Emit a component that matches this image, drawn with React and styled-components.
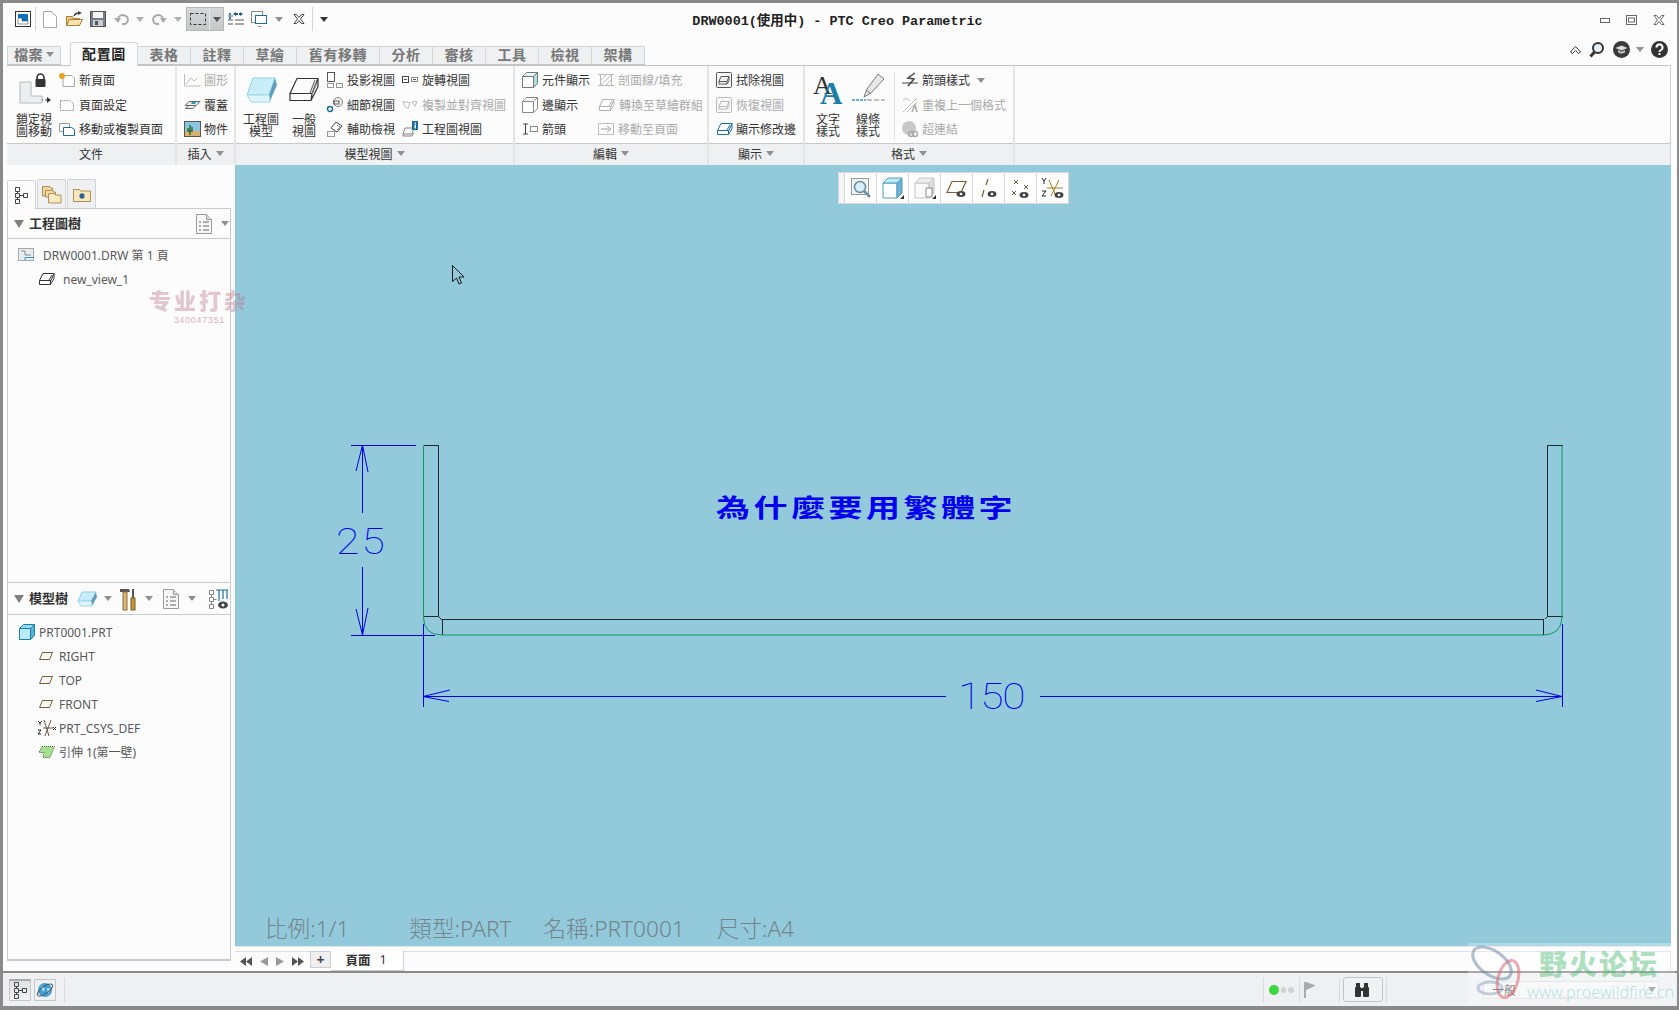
import React from "react";
import styled, { createGlobalStyle } from "styled-components";

const GlobalStyle = createGlobalStyle`
  html, body {
    margin: 0;
    padding: 0;
    background: #8a8a8a;
  }
  * {
    box-sizing: border-box;
  }
`;

const CJK = `"Noto Sans", "Noto Sans CJK TC", sans-serif`;

const Window = styled.div`
  position: relative;
  width: 1679px;
  height: 1010px;
  overflow: hidden;
  display: flex;
  flex-direction: column;
  background: #fcfcfc;
  border-style: solid;
  border-color: #8a8a8a;
  border-width: 3px 2px 4px 3px;
  font-family: ${CJK};
  color: #333;
`;

const TopRow = styled.div`
  display: flex;
  align-items: center;
  height: 32px;
  flex-shrink: 0;
`;

const QuickBar = styled.div`
  flex: 1;
  display: flex;
  align-items: center;
  padding-left: 7px;
`;

const QuickSlot = styled.div`
  width: ${(p) => p.$w}px;
  height: 24px;
  display: flex;
  align-items: center;
  justify-content: center;
  flex-shrink: 0;
`;

const QuickSep = styled.div`
  width: 1px;
  height: 24px;
  background: #d4d6d8;
  flex-shrink: 0;
`;

const SelectCombo = styled.div`
  display: flex;
  width: 38px;
  height: 24px;
  margin: 0 1px;
  background: linear-gradient(#d6d7d9, #c5c7c9);
  border: 1px solid #b5b7b9;
  flex-shrink: 0;
`;

const ComboMain = styled.div`
  flex: 1;
  display: flex;
  align-items: center;
  justify-content: center;
  border-right: 1px solid #e8e8e8;
`;

const ComboArrow = styled.div`
  width: 13px;
  display: flex;
  align-items: center;
  justify-content: center;
`;

const Title = styled.div`
  font-family: "Liberation Mono", "Noto Sans CJK TC", monospace;
  font-weight: 700;
  font-size: 13.45px;
  color: #222;
  white-space: nowrap;
`;

const WinButtons = styled.div`
  flex: 1;
  display: flex;
  align-items: center;
  justify-content: flex-end;
  gap: 16px;
  padding-right: 12px;
  padding-top: 2px;
`;

const TabRow = styled.div`
  display: flex;
  align-items: flex-end;
  height: 30px;
  padding-left: 4px;
  flex-shrink: 0;
`;

const Tab = styled.div`
  width: ${(p) => p.$w}px;
  height: ${(p) => (p.$active ? "24px" : "19px")};
  margin-right: ${(p) => p.$gap || 0}px;
  padding-bottom: 2px;
  display: flex;
  align-items: center;
  justify-content: center;
  gap: 3px;
  font-size: 14px;
  font-weight: 700;
  line-height: 15px;
  letter-spacing: 0.6px;
  color: ${(p) => (p.$active ? "#222" : "#777")};
  background: ${(p) => (p.$active ? "#fcfcfc" : "#eef0f2")};
  border: 1px solid #d3d5d8;
  border-bottom: ${(p) => (p.$active ? "none" : "1px solid #c4c4c4")};
  border-left: ${(p) => (p.$active || p.$first ? "1px solid #d3d5d8" : "none")};
  border-radius: ${(p) => (p.$active ? "3px 3px 0 0" : "0")};
  position: relative;
  top: ${(p) => (p.$active ? "1px" : "0")};
  z-index: ${(p) => (p.$active ? 2 : 1)};
`;

const HelpCluster = styled.div`
  margin-left: auto;
  margin-bottom: 7px;
  padding-right: 9px;
  display: flex;
  align-items: center;
`;

const Ribbon = styled.div`
  display: flex;
  height: 100px;
  margin: 0 6px 0 4px;
  border-top: 1px solid #c4c4c4;
  border-right: 1px solid #d0d0d0;
  flex-shrink: 0;
`;

const Group = styled.div`
  width: ${(p) => p.$w}px;
  flex: ${(p) => (p.$fill ? 1 : "none")};
  display: flex;
  flex-direction: column;
  border-right: ${(p) => (p.$fill ? "none" : "2px solid #e4e5e7")};
`;

const GroupBody = styled.div`
  flex: 1;
  display: flex;
  padding: 2px 0 0 ${(p) => p.$pad || 0}px;
`;

const GroupLabel = styled.div`
  height: 22px;
  padding-bottom: 2px;
  display: flex;
  align-items: center;
  justify-content: center;
  gap: 4px;
  font-size: 12px;
  color: #333;
  background: #eef0f2;
  border-top: 1px solid #c8c8c8;
`;

const LargeBtn = styled.div`
  width: 38px;
  margin-right: ${(p) => p.$gap || 0}px;
  height: 74px;
  display: flex;
  flex-direction: column;
  align-items: center;
  justify-content: space-between;
  padding-top: ${(p) => p.$pt || 6}px;
  flex-shrink: 0;
`;

const LargeText = styled.div`
  font-size: 12px;
  line-height: 12px;
  text-align: center;
  white-space: nowrap;
  margin-bottom: 4px;
`;

const SmallCol = styled.div`
  width: ${(p) => p.$w}px;
  display: flex;
  flex-direction: column;
  flex-shrink: 0;
`;

const SmallRow = styled.div`
  height: 24.5px;
  display: flex;
  align-items: center;
  gap: ${(p) => p.$gap || 4}px;
  font-size: 12px;
  white-space: nowrap;
  color: ${(p) => (p.$off ? "#aaa" : "#333")};
`;

const RowArrow = styled.span`
  margin-left: 3px;
`;

const RibbonSep = styled.div`
  width: 1px;
  height: 68px;
  margin: 4px 7px 0 7px;
  background: #dfe0e2;
`;

const Main = styled.div`
  flex: 1;
  display: flex;
  min-height: 0;
`;

const LeftPanel = styled.div`
  width: 232px;
  display: flex;
  flex-direction: column;
  padding: 14px 4px 10px;
  flex-shrink: 0;
`;

const PanelTabs = styled.div`
  display: flex;
  height: 29px;
  gap: 1px;
  flex-shrink: 0;
`;

const PanelTab = styled.div`
  width: 29px;
  display: flex;
  align-items: center;
  justify-content: center;
  background: ${(p) => (p.$active ? "#fcfcfc" : "#eef0f2")};
  border: 1px solid #d0d2d5;
  border-bottom: none;
  border-radius: 2px 2px 0 0;
  position: relative;
  top: ${(p) => (p.$active ? "1px" : "0")};
`;

const PanelBox = styled.div`
  flex: 1;
  display: flex;
  flex-direction: column;
  background: #fcfcfc;
  border: 1px solid #c8cacc;
  border-bottom-width: 2px;
`;

const Section = styled.div`
  height: ${(p) => p.$h || "auto"};
  flex: ${(p) => (p.$h ? "none" : 1)};
  border-bottom: ${(p) => (p.$h ? "1px solid #c8cacc" : "none")};
`;

const SectionHead = styled.div`
  height: ${(p) => p.$h}px;
  display: flex;
  align-items: center;
  padding-left: 6px;
  border-bottom: 1px solid #c8cacc;
  font-size: 13px;
  font-weight: 700;
  color: #333;
`;

const HeadText = styled.div`
  margin: -2px 0 0 5px;
`;

const HeadSlot = styled.div`
  margin-left: ${(p) => p.$ml || 0}px;
  display: flex;
  align-items: center;
`;

const TreeList = styled.div`
  padding-top: ${(p) => p.$pt}px;
`;

const TreeRow = styled.div`
  height: ${(p) => p.$h || 24}px;
  display: flex;
  align-items: center;
  padding-left: ${(p) => p.$indent}px;
  gap: ${(p) => p.$gap || 5}px;
  font-size: 12px;
  color: #585858;
  white-space: nowrap;
`;

const RightCol = styled.div`
  width: 1436px;
  display: flex;
  flex-direction: column;
  flex-shrink: 0;
`;

const Canvas = styled.div`
  position: relative;
  flex: 1;
  background: #92cadc;
  overflow: hidden;
`;

const Drawing = styled.svg`
  position: absolute;
  left: 0;
  top: 0;
  shape-rendering: crispEdges;
`;

const FloatBar = styled.div`
  position: absolute;
  left: 603px;
  top: 7px;
  height: 32px;
  display: flex;
  padding-left: 5px;
  background: #f4f5f6;
  border: 1px solid #d6d8da;
`;

const FloatCell = styled.div`
  width: 32px;
  display: flex;
  align-items: center;
  justify-content: center;
  background: #fff;
  border-left: 1px solid #d6d8da;
`;

const Note = styled.div`
  position: absolute;
  left: 481px;
  top: 325px;
  font-family: "Noto Sans CJK TC", sans-serif;
  font-size: 34px;
  font-weight: 700;
  line-height: 34px;
  letter-spacing: 3.5px;
  color: #0000ee;
  white-space: nowrap;
  transform: scaleY(0.74);
`;

const DimText = styled.div`
  position: absolute;
  left: ${(p) => p.$x}px;
  top: ${(p) => p.$y}px;
  font-family: Roboto, sans-serif;
  font-weight: 100;
  font-size: 37px;
  line-height: 37px;
  letter-spacing: ${(p) => p.$ls}px;
  color: #0000e6;
  transform-origin: left center;
  transform: scaleX(1.15);
`;

const InfoRow = styled.div`
  position: absolute;
  left: 30px;
  bottom: 1px;
  display: flex;
  gap: 32px;
  font-size: 22.6px;
  line-height: 32px;
  font-weight: 300;
  color: #74848b;
  white-space: nowrap;
`;

const InfoScale = styled.span`
  margin-right: 28px;
`;

const PageBar = styled.div`
  height: 25px;
  display: flex;
  align-items: flex-start;
  padding-top: 4px;
  background: #fcfcfc;
  border-top: 1px solid #e2e4e6;
  flex-shrink: 0;
`;

const PageNav = styled.div`
  width: 75px;
  height: 20px;
  display: flex;
  align-items: center;
  gap: 8px;
  padding-left: 5px;
  border-top: 1px solid #dcdee0;
  flex-shrink: 0;
`;

const PlusBtn = styled.div`
  width: 21px;
  height: 17px;
  display: flex;
  align-items: center;
  justify-content: center;
  font-size: 14px;
  font-weight: 700;
  line-height: 14px;
  color: #444;
  background: #eef0f2;
  border: 1px solid #ccced1;
  flex-shrink: 0;
`;

const PageTab = styled.div`
  width: 73px;
  height: 20px;
  padding: 0 2px 3px 0;
  display: flex;
  align-items: center;
  justify-content: center;
  gap: 9px;
  font-size: 12.5px;
  font-weight: 700;
  color: #333;
  background: #fff;
  border-right: 1px solid #ccced1;
  border-bottom: 1px solid #ccced1;
  flex-shrink: 0;
`;

const PageNum = styled.span`
  font-weight: 400;
  color: #335;
`;

const PageRest = styled.div`
  flex: 1;
  height: 20px;
  border-top: 1px solid #dcdee0;
  border-right: 1px solid #dcdee0;
`;

const StatusBar = styled.div`
  height: 35px;
  display: flex;
  align-items: center;
  padding: 0 20px 0 9px;
  background: #eef0f2;
  border-top: 2px solid #8a8a8a;
  margin-left: -3px;
  margin-right: -2px;
  flex-shrink: 0;
`;

const StatusBtn = styled.div`
  width: 22px;
  height: 22px;
  margin-right: 3px;
  display: flex;
  align-items: center;
  justify-content: center;
  background: ${(p) => (p.$on ? "linear-gradient(#e0e1e3, #f2f3f4)" : "#eef0f2")};
  border: 1px solid #c4c6c9;
  border-top: ${(p) => (p.$on ? "2px solid #a8aaad" : "1px solid #c4c6c9")};
`;

const StatusSep = styled.div`
  width: 1px;
  height: 26px;
  background: #dadcde;
  margin: ${(p) => p.$m || "0"};
  flex-shrink: 0;
`;

const StatusFill = styled.div`
  flex: 1;
`;

const Dots = styled.div`
  width: 30px;
  display: flex;
  align-items: center;
  gap: 2px;
  padding-left: 5px;
`;

const Dot = styled.div`
  width: ${(p) => p.$s}px;
  height: ${(p) => p.$s}px;
  border-radius: 50%;
  background: ${(p) => p.$c};
`;

const FindBtn = styled.div`
  width: 40px;
  height: 25px;
  margin: 0 3px;
  padding-right: 2px;
  display: flex;
  align-items: center;
  justify-content: center;
  background: #f0f1f2;
  border: 1px solid #c2c4c7;
  border-radius: 3px;
`;

const ModeSelect = styled.div`
  width: 176px;
  height: 18px;
  margin-left: 96px;
  display: flex;
  align-items: center;
  padding-left: 8px;
  justify-content: space-between;
  font-size: 12px;
  color: #555;
  background: #f4f5f6;
  border: 1px solid #dcdee0;
`;

const ModeArrow = styled.div`
  width: 14px;
  height: 16px;
  display: flex;
  align-items: center;
  justify-content: center;
  border-left: 1px solid #dcdee0;
`;

const Stamp = styled.div`
  position: absolute;
  left: 143px;
  top: 284px;
  display: flex;
  flex-direction: column;
  align-items: flex-end;
  width: 103px;
  pointer-events: none;
`;

const StampMain = styled.div`
  font-family: "Noto Sans CJK SC", sans-serif;
  font-size: 22px;
  font-weight: 900;
  line-height: 24px;
  letter-spacing: 3px;
  color: rgba(190, 120, 140, 0.42);
  white-space: nowrap;
`;

const StampNum = styled.div`
  margin: 5px 24px 0 0;
  font-family: "Liberation Sans", sans-serif;
  font-size: 9px;
  line-height: 9px;
  letter-spacing: 0.7px;
  color: rgba(190, 120, 140, 0.6);
`;

const Forum = styled.div`
  position: absolute;
  left: 1465px;
  top: 940px;
  width: 207px;
  height: 62px;
  display: flex;
  background: rgba(255, 255, 255, 0.28);
  pointer-events: none;
`;

const ForumText = styled.div`
  display: flex;
  flex-direction: column;
  align-items: flex-start;
  margin-left: -1px;
`;

const ForumName = styled.div`
  margin: 5px 0 0 12px;
  font-family: "Noto Sans CJK SC", sans-serif;
  font-size: 28px;
  font-weight: 900;
  line-height: 30px;
  letter-spacing: 2px;
  color: rgba(60, 180, 100, 0.42);
  white-space: nowrap;
`;

const ForumUrl = styled.div`
  margin-top: 5px;
  font-size: 16.2px;
  line-height: 18px;
  font-weight: 300;
  color: rgba(90, 190, 190, 0.42);
  white-space: nowrap;
`;

const Svg = styled.svg`
  display: block;
  flex-shrink: 0;
  overflow: visible;
`;

const Cursor = styled.svg`
  position: absolute;
  left: 217px;
  top: 100px;
`;

const ico = (w, h, body) => (
  <Svg width={w} height={h} viewBox={`0 0 ${w} ${h}`}>
    {body}
  </Svg>
);

const Arrow = ({ c = "#8f8f8f" }) => ico(8, 5, <path d="M0 0h8L4 5z" fill={c} />);

const plane = (c = "#7a5c2e") =>
  ico(16, 10, <path d="M4.5 1.5h10L11.5 8.5H1.5z" fill="none" stroke={c} />);

const docList = ico(
  16,
  20,
  <g>
    <path d="M.5.5h10l5 5v14H.5z" fill="#f6f6f6" stroke="#9a9a9a" />
    <path d="M10.5.5v5h5" fill="#ddd" stroke="#9a9a9a" />
    <path d="M3 8h2M7 8h6M3 12h2M7 12h6M3 16h2M7 16h6" stroke="#666" />
  </g>
);

const treeIcon = (c = "#444") =>
  ico(
    15,
    17,
    <path
      d="M1.5.5h4v4h-4zM1.5 6.5h4v4h-4zM1.5 12.5h4v4h-4zM9.5 6.5h4v4h-4zM3.5 4.5v2M3.5 10.5v2M5.5 8.5h4"
      fill="none"
      stroke={c}
    />
  );

const eyeMark = (x, y) => (
  <g>
    <ellipse cx={x} cy={y} rx="4.5" ry="3" fill="#444" />
    <circle cx={x} cy={y} r="1.3" fill="#fff" />
  </g>
);

const partLarge = ico(
  32,
  26,
  <g>
    <path d="M8 1h22l-6 17H2z" fill="#c8eefa" stroke="#8fd0e4" />
    <path d="M30 1l2 7-7 16-1-6z" fill="#5f9fbd" />
    <path d="M2 18l4 7h19l-1-7z" fill="#dff5fc" stroke="#9ed8e8" />
  </g>
);

const partSmallBlue = ico(
  20,
  16,
  <g>
    <path d="M5 1h14l-4 9H1z" fill="#c8eefa" stroke="#8fd0e4" />
    <path d="M19 1l1 5-5 9-1-5z" fill="#5f9fbd" />
    <path d="M1 10l3 5h11l-1-5z" fill="#dff5fc" stroke="#9ed8e8" />
  </g>
);

const partWire = ico(
  32,
  26,
  <g fill="none" stroke="#333" strokeWidth="1.2">
    <path d="M9 1.5h21l-6 15H2zM2 16.5v7h21l7-14v-8M24 16.5l-1 7" />
    <path d="M27 3l-5 13M29 5l-5 12" stroke="#777" />
  </g>
);

const smallPart = (c = "#666", fill = "#fff") =>
  ico(
    17,
    14,
    <g fill={fill} stroke={c}>
      <path d="M5 1.5h11l-3 7H1.5zM1.5 8.5v4h11l3.5-6v-5M12.5 8.5v4" />
      <path d="M14 3l-3 5" />
    </g>
  );

const cube = (stroke, top, side, front = "#fff") =>
  ico(
    16,
    16,
    <g stroke={stroke}>
      <path d="M.5 4.5h11v11H.5z" fill={front} />
      <path d="M.5 4.5l4-4h11l-4 4z" fill={top} />
      <path d="M11.5 4.5l4-4v11l-4 4z" fill={side} />
    </g>
  );

const boxed = (c) =>
  ico(
    17,
    16,
    <g>
      <rect x=".5" y=".5" width="15" height="15" rx="1" fill="#f8f8f8" stroke={c} />
      <path d="M5 4.5h8l-2 5H3zM3 9.5v2.500h8l2-3v-4.500M11 9.5v2.500" fill="none" stroke={c} />
    </g>
  );

const lockMove = ico(
  33,
  32,
  <g>
    <path d="M2 8h11v14h11v7H2z" fill="#eceff1" stroke="#b8b8b8" />
    <path d="M19 5V3.5a3.5 3.5 0 0 1 7 0V5" fill="none" stroke="#333" strokeWidth="1.6" />
    <rect x="17.5" y="5" width="10" height="8" rx="1" fill="#333" />
    <path d="M24 26h1M27 26h3" stroke="#333" />
    <path d="M29 23l4 3-4 3z" fill="#333" />
  </g>
);

const textStyle = ico(
  30,
  32,
  <g>
    <text x="0" y="21" fontFamily="Liberation Serif, serif" fontSize="26" fill="#333">
      A
    </text>
    <text x="7" y="31" fontFamily="Liberation Serif, serif" fontWeight="700" fontSize="31" fill="#1c7ea6">
      A
    </text>
  </g>
);

const lineStyle = ico(
  33,
  30,
  <g>
    <path d="M26 1l6 5-13 14-7 4 3-8z" fill="#e6e6e6" stroke="#777" />
    <path d="M14 17l4 3" stroke="#777" />
    <path d="M0 27h14" stroke="#2f9ac6" strokeWidth="1.5" strokeDasharray="3 1" />
    <path d="M15 27h18" stroke="#aaa" strokeWidth="1.5" strokeDasharray="5 2" />
  </g>
);

const csys = ico(
  18,
  18,
  <g>
    <path d="M6 1l5 16M13 1L7 17M5 9h10" stroke="#6b5a3a" fill="none" />
    <path d="M0 2l2 2 2-2M2 4v2M0 11h3l-3 4h3M15 8l3 3M18 8l-3 3" stroke="#222" fill="none" />
  </g>
);

const drwIcon = ico(
  16,
  13,
  <g>
    <rect x=".5" y=".5" width="15" height="12" fill="#e8edf0" stroke="#a3a8ab" />
    <path d="M3 3h4v4h6" fill="none" stroke="#888" />
    <path d="M7 12.5V9.5h8.5" fill="none" stroke="#2f9ac6" />
  </g>
);

function Item({ icon, off, gap, after, children }) {
  return (
    <SmallRow $off={off} $gap={gap}>
      {icon}
      <span>{children}</span>
      {after && <RowArrow>{after}</RowArrow>}
    </SmallRow>
  );
}

const quickIcons = {
  app: ico(
    16,
    16,
    <g>
      <rect x=".5" y=".5" width="15" height="15" fill="#fff" stroke="#333" />
      <rect x="3" y="3" width="10" height="10" fill="#0a72c4" />
      <path d="M3 7h4v3h6v3H3z" fill="#fff" stroke="#333" strokeWidth=".5" />
    </g>
  ),
  doc: ico(14, 17, <path d="M.5.5h8l5 5v11H.5z" fill="#fff" stroke="#a8a8a8" />),
  open: ico(
    17,
    16,
    <g>
      <path d="M.5 5.5h6l1 2h6v7H.5z" fill="#e8c77c" stroke="#a5803f" />
      <path d="M.5 14.5l3-6h13l-3 6z" fill="#f8e2ad" stroke="#a5803f" />
      <path d="M8 5c1-3 3-3 5-3" stroke="#444" fill="none" strokeWidth="1.4" />
      <path d="M12 0l4 2-4 2z" fill="#444" />
    </g>
  ),
  save: ico(
    16,
    16,
    <g>
      <rect x=".5" y=".5" width="15" height="15" fill="#77808a" stroke="#555" />
      <rect x="3" y="1" width="10" height="6" fill="#f5f5f5" />
      <rect x="3" y="9" width="10" height="6" fill="#c9ced3" />
      <rect x="5" y="10" width="3" height="4" fill="#555" />
    </g>
  ),
  undo: ico(
    16,
    13,
    <g>
      <path d="M4 6a5 4.500 0 1 1 4 5h3" fill="none" stroke="#a8a8a8" strokeWidth="2" />
      <path d="M0 5h7l-3 5z" fill="#a8a8a8" />
    </g>
  ),
  redo: ico(
    16,
    13,
    <g>
      <path d="M12 6a5 4.500 0 1 0-4 5H5" fill="none" stroke="#a8a8a8" strokeWidth="2" />
      <path d="M16 5H9l3 5z" fill="#a8a8a8" />
    </g>
  ),
  select: ico(
    16,
    12,
    <rect x=".5" y=".5" width="15" height="11" fill="none" stroke="#333" strokeDasharray="3 2" />
  ),
  regen: ico(
    16,
    15,
    <g>
      <path d="M0 4h5M0 8h5M0 12h5M7 8h9M7 12h9" stroke="#555" />
      <path d="M1 1h2v2H1zM1 5h2v2H1z" fill="#1a7fb0" />
      <path d="M6 2h4M11 2h3" stroke="#1a5f90" strokeWidth="2" />
      <path d="M8 0L5 2l3 2zM12 0l3 2-3 2z" fill="#1a5f90" />
    </g>
  ),
  win: ico(
    16,
    16,
    <g fill="#fff">
      <rect x=".5" y=".5" width="11" height="11" stroke="#888" />
      <rect x="4.5" y="4.5" width="11" height="8" stroke="#1a6f9a" />
      <path d="M7 15.5h3" stroke="#888" />
    </g>
  ),
  close: ico(
    12,
    10,
    <path d="M1 .5h2.500L6 3.500 8.500.5H11L7.500 5 11 9.500H8.500L6 6.500 3.500 9.500H1L4.500 5z" fill="#fff" stroke="#444" />
  ),
};

const winMin = ico(10, 5, <rect x=".5" y=".5" width="9" height="4" fill="#fff" stroke="#666" />);
const winMax = ico(
  11,
  10,
  <g fill="none" stroke="#666">
    <rect x=".5" y=".5" width="10" height="9" />
    <rect x="2.5" y="3" width="6" height="4" />
  </g>
);
const winClose = ico(
  12,
  10,
  <path d="M1 .5h2.500L6 3.500 8.500.5H11L7.500 5 11 9.500H8.500L6 6.500 3.500 9.500H1L4.500 5z" fill="#fff" stroke="#666" />
);

const chevrons = ico(11, 8, <path d="M.5 6L5.500.5l5 5.500-2 1.500-3-3-3 3z" fill="#fff" stroke="#333" />);
const searchIcon = ico(
  15,
  16,
  <g>
    <circle cx="9" cy="6" r="5" fill="#e7f3fb" stroke="#333" strokeWidth="2" />
    <path d="M5.500 10L1.500 14.500" stroke="#333" strokeWidth="3" />
  </g>
);
const hatIcon = ico(
  17,
  17,
  <g>
    <circle cx="8.500" cy="8.500" r="8.500" fill="#3a3a3a" />
    <path d="M2.500 7l6-2.500 6 2.500-6 2.500z" fill="#dcdcdc" />
    <path d="M5 9v2.500c2 1.500 5 1.500 7 0V9l-3.500 1.500z" fill="#bbb" />
  </g>
);
const helpIcon = ico(
  17,
  17,
  <g>
    <circle cx="8.500" cy="8.500" r="8.500" fill="#333" />
    <path d="M5.500 6.500a3 3 0 1 1 4.500 2.500c-1 .6-1.500 1-1.500 2" fill="none" stroke="#fff" strokeWidth="2" />
    <rect x="7.500" y="12" width="2" height="2" fill="#fff" />
  </g>
);

const folders = ico(
  20,
  20,
  <g>
    <path d="M.5 2.500h7l1 1.500h2v8H.5z" fill="#efd59c" stroke="#b0905a" />
    <path d="M3.500 6.500h7l1 1.500h2v5h-10z" fill="#f2dca9" stroke="#b0905a" />
    <path d="M6.500 9.500h6l1 1.500h5.500v8H6.500z" fill="#fae9c2" stroke="#b0905a" />
  </g>
);

const folderStar = ico(
  18,
  15,
  <g>
    <path d="M.5 2.500h6l1 1.500h10v10.500H.5z" fill="#f8e6bd" stroke="#b0905a" />
    <path d="M9 6v6M6 9h6M7 7l4 4M11 7l-4 4" stroke="#1a5f90" strokeWidth="1.200" />
  </g>
);

const triangle = ico(10, 8, <path d="M0 0h10L5 8z" fill="#808080" />);

const tools = ico(
  16,
  22,
  <g>
    <path d="M0 1h9l1 3H0z" fill="#555" />
    <rect x="3" y="4" width="4" height="18" fill="#d9b77a" stroke="#8a6c38" />
    <rect x="12" y="1" width="2" height="9" fill="#555" />
    <rect x="11" y="10" width="4" height="12" fill="#c9973d" stroke="#7a5a20" />
  </g>
);

const modelTreeCfg = ico(
  20,
  20,
  <g fill="none">
    <path d="M1.500 1.500h4v4h-4zM1.500 8.500h4v4h-4zM1.500 15.500h4v4h-4zM3.500 5.500v3M3.500 12.500v3M5.500 10.500h3" stroke="#888" />
    <path d="M8 1h12M11 1v11M15 1v9M19 1v9" stroke="#1a6f9a" strokeWidth="1.200" />
    <ellipse cx="15" cy="16" rx="5" ry="3.500" fill="#444" />
    <circle cx="15" cy="16" r="1.500" fill="#fff" />
  </g>
);

const tri = (w, d, c) => ico(w, 9, <path d={d} fill={c} />);

const Sketch = () => (
  <Drawing width="1436" height="781" viewBox="235 165 1436 781">
    <g fill="none" strokeWidth="1">
      <g stroke="#1d2a30">
        <path d="M423.5 445.500h15v171h-15M438.500 616.500l3 3h1102M442.500 619.500v15" />
        <path d="M1562.500 445.500h-15v171h15M1547.500 616.500l-3 3M1543.500 619.500v15" />
      </g>
      <g stroke="#0a9a60" shapeRendering="geometricPrecision">
        <path d="M423.500 445.500v172q0 17 18 17.500h1102q18-.5 18.500-17.500v-172" />
      </g>
      <g stroke="#0000e6">
        <path d="M351 445.500h65M362.500 445v68M362.500 567v68M351 635.500h84" />
        <path d="M423.500 624v83M1562.500 624v83M423 696.500h523M1040 696.500h522" />
      </g>
      <g stroke="#0000e6" shapeRendering="geometricPrecision">
        <path d="M356 471l6.500-26 5.500 27M356 609l6.500 26 5.500-27" />
        <path d="M450 690l-27 6.500 26 5M1536 690l26 6.500-26 5" />
      </g>
    </g>
  </Drawing>
);

export default function App() {
  return (
    <>
      <GlobalStyle />
      <Window>
        <TopRow>
          <QuickBar>
            <QuickSlot $w={25}>{quickIcons.app}</QuickSlot>
            <QuickSep />
            <QuickSlot $w={27}>{quickIcons.doc}</QuickSlot>
            <QuickSlot $w={23}>{quickIcons.open}</QuickSlot>
            <QuickSlot $w={24}>{quickIcons.save}</QuickSlot>
            <QuickSlot $w={23}>{quickIcons.undo}</QuickSlot>
            <QuickSlot $w={14}>
              <Arrow c="#b0b0b0" />
            </QuickSlot>
            <QuickSlot $w={24}>{quickIcons.redo}</QuickSlot>
            <QuickSlot $w={14}>
              <Arrow c="#b0b0b0" />
            </QuickSlot>
            <SelectCombo>
              <ComboMain>{quickIcons.select}</ComboMain>
              <ComboArrow>
                <Arrow c="#555" />
              </ComboArrow>
            </SelectCombo>
            <QuickSlot $w={21}>{quickIcons.regen}</QuickSlot>
            <QuickSlot $w={26}>{quickIcons.win}</QuickSlot>
            <QuickSlot $w={14}>
              <Arrow />
            </QuickSlot>
            <QuickSlot $w={26}>{quickIcons.close}</QuickSlot>
            <QuickSep />
            <QuickSlot $w={22}>
              <Arrow c="#333" />
            </QuickSlot>
          </QuickBar>
          <Title>DRW0001(使用中) - PTC Creo Parametric</Title>
          <WinButtons>
            {winMin}
            {winMax}
            {winClose}
          </WinButtons>
        </TopRow>

        <TabRow>
          <Tab $w={54} $gap={9} $first>
            檔案 <Arrow />
          </Tab>
          <Tab $w={68} $active>
            配置圖
          </Tab>
          <Tab $w={53}>表格</Tab>
          <Tab $w={53}>註釋</Tab>
          <Tab $w={53}>草繪</Tab>
          <Tab $w={83}>舊有移轉</Tab>
          <Tab $w={53}>分析</Tab>
          <Tab $w={53}>審核</Tab>
          <Tab $w={53}>工具</Tab>
          <Tab $w={53}>檢視</Tab>
          <Tab $w={53}>架構</Tab>
          <HelpCluster>
            {chevrons}
            <HeadSlot $ml={8}>{searchIcon}</HeadSlot>
            <HeadSlot $ml={9}>{hatIcon}</HeadSlot>
            <HeadSlot $ml={6}>
              <Arrow />
            </HeadSlot>
            <HeadSlot $ml={7}>{helpIcon}</HeadSlot>
          </HelpCluster>
        </TabRow>

        <Ribbon>
          <Group $w={170}>
            <GroupBody $pad={8}>
              <LargeBtn $gap={6} $pt={6}>
                {lockMove}
                <LargeText>
                  鎖定視
                  <br />
                  圖移動
                </LargeText>
              </LargeBtn>
              <SmallCol $w={110}>
                <Item
                  icon={ico(
                    16,
                    14,
                    <g>
                      <path d="M4 2.500h9l2.500 2.500v8.500H4z" fill="#fff" stroke="#a8a8a8" />
                      <circle cx="3" cy="3" r="3" fill="#f0a020" />
                    </g>
                  )}
                >
                  新頁面
                </Item>
                <Item
                  icon={ico(
                    16,
                    14,
                    <path d="M1.500 2.500h9l4 3v7h-13z" fill="#fbfbfb" stroke="#999" strokeDasharray="2 1" />
                  )}
                >
                  頁面設定
                </Item>
                <Item
                  icon={ico(
                    16,
                    14,
                    <g fill="#fff">
                      <path d="M.5 1.500h10v8H.5z" stroke="#999" />
                      <path d="M4.500 5.500h8l3 2v6h-11z" stroke="#1a6f9a" />
                    </g>
                  )}
                >
                  移動或複製頁面
                </Item>
              </SmallCol>
            </GroupBody>
            <GroupLabel>文件</GroupLabel>
          </Group>

          <Group $w={59}>
            <GroupBody $pad={7}>
              <SmallCol $w={50}>
                <Item
                  off
                  gap={3}
                  icon={ico(17, 14, <path d="M.5 1v12h16M2 11l5-6 3 3 3-3" fill="none" stroke="#bbb" />)}
                >
                  圖形
                </Item>
                <Item
                  gap={3}
                  icon={ico(
                    17,
                    14,
                    <g fill="#eee" stroke="#666">
                      <path d="M5 3.500h11l-4 4H1z" />
                      <path d="M5 7.500h7l-3 3H1.500z" />
                      <path d="M8 4h4l-1 2H7z" fill="#2f9ac6" stroke="none" />
                    </g>
                  )}
                >
                  覆蓋
                </Item>
                <Item
                  gap={3}
                  icon={ico(
                    17,
                    16,
                    <g>
                      <rect x=".5" y=".5" width="16" height="15" fill="#8ec4e4" stroke="#555" />
                      <rect x="1" y="10" width="15" height="5" fill="#d8b070" />
                      <path d="M6 4v10M4 7v3h4V6" stroke="#2d6e2d" strokeWidth="1.500" fill="none" />
                    </g>
                  )}
                >
                  物件
                </Item>
              </SmallCol>
            </GroupBody>
            <GroupLabel>
              插入 <Arrow />
            </GroupLabel>
          </Group>

          <Group $w={279}>
            <GroupBody $pad={6}>
              <LargeBtn $gap={5} $pt={9}>
                {partLarge}
                <LargeText>
                  工程圖
                  <br />
                  模型
                </LargeText>
              </LargeBtn>
              <LargeBtn $gap={4} $pt={9}>
                {partWire}
                <LargeText>
                  一般
                  <br />
                  視圖
                </LargeText>
              </LargeBtn>
              <SmallCol $w={75}>
                <Item
                  icon={ico(
                    16,
                    16,
                    <g fill="#fff" stroke="#555">
                      <rect x=".5" y=".5" width="7" height="9" />
                      <rect x=".5" y="11.500" width="6" height="4" stroke="#999" />
                      <rect x="9.500" y="11.500" width="6" height="4" stroke="#999" />
                    </g>
                  )}
                >
                  投影視圖
                </Item>
                <Item
                  icon={ico(
                    16,
                    16,
                    <g fill="none">
                      <circle cx="11" cy="5" r="4.500" stroke="#777" />
                      <rect x="7" y="4" width="5" height="3" stroke="#555" />
                      <circle cx="3" cy="12" r="2.500" stroke="#1a6f9a" strokeWidth="1.500" />
                    </g>
                  )}
                >
                  細節視圖
                </Item>
                <Item
                  icon={ico(
                    16,
                    16,
                    <g fill="#fff">
                      <path d="M9 1l6 4-5 6-6-4z" stroke="#444" />
                      <path d="M10 4l3 2-3 3" stroke="#888" fill="none" />
                      <rect x=".5" y="10.500" width="7" height="5" stroke="#999" />
                    </g>
                  )}
                >
                  輔助檢視
                </Item>
              </SmallCol>
              <SmallCol $w={96}>
                <Item
                  icon={ico(
                    16,
                    8,
                    <g fill="none">
                      <rect x=".5" y=".5" width="6" height="6" stroke="#444" />
                      <rect x="9.500" y="1.500" width="6" height="4" stroke="#888" />
                      <path d="M2 3.500h3M11 3.500h3" stroke="#555" />
                    </g>
                  )}
                >
                  旋轉視圖
                </Item>
                <Item
                  off
                  icon={ico(
                    16,
                    10,
                    <path d="M1 1.500l7 1-2 6-3-2zM10 2l5-.5-2 5z" fill="none" stroke="#bbb" />
                  )}
                >
                  複製並對齊視圖
                </Item>
                <Item
                  icon={ico(
                    16,
                    16,
                    <g>
                      <path d="M3 7h9l-2 6H1zM1 13v2h9l2-3" fill="#f8f8f8" stroke="#888" />
                      <rect x="10" y="0" width="6" height="9" fill="#1a6f9a" />
                      <rect x="12.500" y="3.500" width="1.500" height="4" fill="#fff" />
                      <rect x="12.500" y="1.500" width="1.500" height="1.200" fill="#fff" />
                    </g>
                  )}
                >
                  工程圖視圖
                </Item>
              </SmallCol>
            </GroupBody>
            <GroupLabel>
              模型視圖 <Arrow />
            </GroupLabel>
          </Group>

          <Group $w={194}>
            <GroupBody $pad={7}>
              <SmallCol $w={76}>
                <Item icon={cube("#777", "#e4f6fc", "#aee0f0")}>元件顯示</Item>
                <Item icon={cube("#8a8a8a", "#fbfbfb", "#fbfbfb")}>邊顯示</Item>
                <Item
                  icon={ico(
                    16,
                    16,
                    <g fill="none" stroke="#444">
                      <path d="M3.500 3v10M1 3h5M1 13h5" />
                      <rect x="8.500" y="5.500" width="7" height="5" stroke="#888" />
                    </g>
                  )}
                >
                  箭頭
                </Item>
              </SmallCol>
              <SmallCol $w={104}>
                <Item
                  off
                  icon={ico(
                    16,
                    16,
                    <g fill="none" stroke="#bbb">
                      <rect x="2.500" y="2.500" width="11" height="11" />
                      <path d="M3 8l5-5M3 13L13 3M8 13l5-5M0 2.500h16M0 13.500h16" />
                    </g>
                  )}
                >
                  剖面線/填充
                </Item>
                <Item off icon={smallPart("#b0b0b0")}>
                  轉換至草繪群組
                </Item>
                <Item
                  off
                  icon={ico(
                    16,
                    14,
                    <g fill="#fff" stroke="#bbb">
                      <path d="M.5 1.500h15v11H.5z" />
                      <path d="M3 7h8M9 4l4 3-4 3" fill="none" stroke="#999" />
                    </g>
                  )}
                >
                  移動至頁面
                </Item>
              </SmallCol>
            </GroupBody>
            <GroupLabel>
              編輯 <Arrow />
            </GroupLabel>
          </Group>

          <Group $w={96}>
            <GroupBody $pad={7}>
              <SmallCol $w={86}>
                <Item gap={3} icon={boxed("#555")}>
                  拭除視圖
                </Item>
                <Item off gap={3} icon={boxed("#bbb")}>
                  恢復視圖
                </Item>
                <Item gap={3} icon={smallPart("#1a6f9a")}>
                  顯示修改邊
                </Item>
              </SmallCol>
            </GroupBody>
            <GroupLabel>
              顯示 <Arrow />
            </GroupLabel>
          </Group>

          <Group $w={210}>
            <GroupBody $pad={4}>
              <LargeBtn $gap={2} $pt={5}>
                {textStyle}
                <LargeText>
                  文字
                  <br />
                  樣式
                </LargeText>
              </LargeBtn>
              <LargeBtn $pt={5}>
                {lineStyle}
                <LargeText>
                  線條
                  <br />
                  樣式
                </LargeText>
              </LargeBtn>
              <RibbonSep />
              <SmallCol $w={100}>
                <Item
                  after={<Arrow />}
                  icon={ico(
                    16,
                    16,
                    <g fill="none" stroke="#444">
                      <path d="M0 11h16" />
                      <path d="M13 1L6 6l6 1-6 7" strokeWidth="1.500" />
                    </g>
                  )}
                >
                  箭頭樣式
                </Item>
                <Item
                  off
                  icon={ico(
                    16,
                    16,
                    <g fill="none" stroke="#bbb">
                      <path d="M1 15L15 1M5 15L15 5M1 3c3-2 5-2 7 1" />
                      <path d="M10 15l3-7 2 7" stroke="#aaa" strokeWidth="1.500" />
                    </g>
                  )}
                >
                  重複上一個格式
                </Item>
                <Item
                  off
                  icon={ico(
                    16,
                    16,
                    <g>
                      <circle cx="7" cy="7" r="7" fill="#c8c8c8" />
                      <circle cx="9" cy="13" r="2.500" fill="none" stroke="#aaa" strokeWidth="1.500" />
                      <circle cx="13" cy="13" r="2.500" fill="none" stroke="#aaa" strokeWidth="1.500" />
                    </g>
                  )}
                >
                  超連結
                </Item>
              </SmallCol>
            </GroupBody>
            <GroupLabel>
              格式 <Arrow />
            </GroupLabel>
          </Group>

          <Group $fill>
            <GroupBody />
            <GroupLabel />
          </Group>
        </Ribbon>

        <Main>
          <LeftPanel>
            <PanelTabs>
              <PanelTab $active>{treeIcon()}</PanelTab>
              <PanelTab>{folders}</PanelTab>
              <PanelTab>{folderStar}</PanelTab>
            </PanelTabs>
            <PanelBox>
              <Section $h="374px">
                <SectionHead $h={30}>
                  {triangle}
                  <HeadText>工程圖樹</HeadText>
                  <HeadSlot $ml={115}>{docList}</HeadSlot>
                  <HeadSlot $ml={9}>
                    <Arrow />
                  </HeadSlot>
                </SectionHead>
                <TreeList $pt={3}>
                  <TreeRow $indent={10} $gap={9} $h={25}>
                    {drwIcon}
                    DRW0001.DRW 第 1 頁
                  </TreeRow>
                  <TreeRow $indent={30} $gap={8} $h={24}>
                    {smallPart("#333")}
                    new_view_1
                  </TreeRow>
                </TreeList>
              </Section>
              <Section>
                <SectionHead $h={32}>
                  {triangle}
                  <HeadText>模型樹</HeadText>
                  <HeadSlot $ml={9}>{partSmallBlue}</HeadSlot>
                  <HeadSlot $ml={7}>
                    <Arrow />
                  </HeadSlot>
                  <HeadSlot $ml={8}>{tools}</HeadSlot>
                  <HeadSlot $ml={9}>
                    <Arrow />
                  </HeadSlot>
                  <HeadSlot $ml={10}>{docList}</HeadSlot>
                  <HeadSlot $ml={9}>
                    <Arrow />
                  </HeadSlot>
                  <HeadSlot $ml={12}>{modelTreeCfg}</HeadSlot>
                </SectionHead>
                <TreeList $pt={5}>
                  <TreeRow $indent={11} $gap={4}>
                    {cube("#1a7fa8", "#8fdcf2", "#58b4d4", "#b8ecfa")}
                    PRT0001.PRT
                  </TreeRow>
                  <TreeRow $indent={30} $gap={5}>
                    {plane()}
                    RIGHT
                  </TreeRow>
                  <TreeRow $indent={30} $gap={5}>
                    {plane()}
                    TOP
                  </TreeRow>
                  <TreeRow $indent={30} $gap={5}>
                    {plane()}
                    FRONT
                  </TreeRow>
                  <TreeRow $indent={30} $gap={3}>
                    {csys}
                    PRT_CSYS_DEF
                  </TreeRow>
                  <TreeRow $indent={30} $gap={4}>
                    {ico(
                      17,
                      14,
                      <path
                        d="M4 1.500h12.500L12 12.500H5l1-5H1z"
                        fill="#a8e090"
                        stroke="#2a6a2a"
                        strokeDasharray="1 1"
                      />
                    )}
                    引伸 1(第一壁)
                  </TreeRow>
                </TreeList>
              </Section>
            </PanelBox>
          </LeftPanel>

          <RightCol>
            <Canvas>
              <Sketch />
              <Note>為什麼要用繁體字</Note>
              <DimText $x={101} $y={358} $ls={2}>
                25
              </DimText>
              <DimText $x={723} $y={513} $ls={-1}>
                150
              </DimText>
              <FloatBar>
                <FloatCell>
                  {ico(
                    20,
                    20,
                    <g>
                      <rect x=".5" y=".5" width="17" height="16" fill="#f4f4f4" stroke="#999" />
                      <circle cx="9" cy="9" r="5.500" fill="#d8effa" stroke="#6a8fa6" strokeWidth="1.500" />
                      <path d="M13 13l6 6" stroke="#6a8fa6" strokeWidth="2.500" />
                    </g>
                  )}
                </FloatCell>
                <FloatCell>
                  {ico(
                    22,
                    22,
                    <g stroke="#4f9cbc">
                      <path d="M1 6h14v15H1z" fill="#fff" />
                      <path d="M1 6l5-5h14l-5 5z" fill="#bfe9f7" />
                      <path d="M15 6l5-5v15l-5 5z" fill="#6db4d2" />
                      <path d="M22 22h-4l4-4z" fill="#333" stroke="none" />
                    </g>
                  )}
                </FloatCell>
                <FloatCell>
                  {ico(
                    22,
                    22,
                    <g stroke="#c4c4c4">
                      <path d="M1 6h14v15H1z" fill="#fafafa" />
                      <path d="M1 6l5-5h14l-5 5z" fill="#eee" />
                      <path d="M15 6l5-5v15l-5 5z" fill="#ddd" />
                      <path d="M12 11h6v9h-6z" fill="#fff" stroke="#888" />
                      <path d="M22 22h-4l4-4z" fill="#333" stroke="none" />
                    </g>
                  )}
                </FloatCell>
                <FloatCell>
                  {ico(
                    22,
                    20,
                    <g>
                      <path d="M6 3.500h14L15 14.500H1z" fill="none" stroke="#7a5c2e" strokeWidth="1.200" />
                      {eyeMark(15, 16)}
                    </g>
                  )}
                </FloatCell>
                <FloatCell>
                  {ico(
                    20,
                    22,
                    <g>
                      <path d="M9 2L7 8M5 13l-2 7" stroke="#7a5c2e" strokeWidth="1.200" />
                      {eyeMark(13, 17)}
                    </g>
                  )}
                </FloatCell>
                <FloatCell>
                  {ico(
                    20,
                    22,
                    <g>
                      <path d="M3 3l4 4M7 3L3 7M13 8l4 4M17 8l-4 4M1 14l4 4M5 14l-4 4" stroke="#6b5a3a" />
                      {eyeMark(13, 18)}
                    </g>
                  )}
                </FloatCell>
                <FloatCell>
                  {ico(
                    22,
                    22,
                    <g>
                      <path d="M7 3l7 16M17 3L9 19M5 11h16" stroke="#a87a20" />
                      <path d="M0 1l2 3 2-3M2 4v3M0 14h4l-4 5h4" stroke="#222" fill="none" />
                      {eyeMark(17, 18)}
                    </g>
                  )}
                </FloatCell>
              </FloatBar>
              <Cursor width="13" height="20" viewBox="0 0 13 20">
                <path d="M.5.500v16l4-3.500 2.500 6 2.500-1-2.500-6h5z" fill="#92cadc" stroke="#1a1a1a" />
              </Cursor>
              <InfoRow>
                <InfoScale>比例:1/1</InfoScale>
                <span>類型:PART</span>
                <span>名稱:PRT0001</span>
                <span>尺寸:A4</span>
              </InfoRow>
            </Canvas>
            <PageBar>
              <PageNav>
                {tri(12, "M6 0v9L0 4.500zM12 0v9L6 4.500z", "#555")}
                {tri(8, "M8 0v9L0 4.500z", "#999")}
                {tri(8, "M0 0v9l8-4.500z", "#999")}
                {tri(12, "M0 0v9l6-4.500zM6 0v9l6-4.500z", "#555")}
              </PageNav>
              <PlusBtn>+</PlusBtn>
              <PageTab>
                頁面 <PageNum>1</PageNum>
              </PageTab>
              <PageRest />
            </PageBar>
          </RightCol>
        </Main>

        <StatusBar>
          <StatusBtn $on>{treeIcon()}</StatusBtn>
          <StatusBtn>
            {ico(
              18,
              16,
              <g>
                <circle cx="9" cy="8" r="7" fill="#3f9fdc" />
                <path d="M5 4l4 2-2 4zM11 6l4 1-3 5z" fill="#bfe6fa" />
                <ellipse cx="9" cy="8" rx="9" ry="3.500" transform="rotate(-35 9 8)" fill="none" stroke="#555" />
              </g>
            )}
          </StatusBtn>
          <StatusSep $m="0 0 0 5px" />
          <StatusFill />
          <StatusSep />
          <Dots>
            <Dot $s={10} $c="#3ed63e" />
            <Dot $s={6} $c="#d0d2d4" />
            <Dot $s={6} $c="#d0d2d4" />
          </Dots>
          <StatusSep $m="0 4px 0 5px" />
          {ico(
            12,
            16,
            <g>
              <rect x="0" y="0" width="2" height="16" fill="#aaa" />
              <path d="M2 0l10 3.500L2 8z" fill="#aaa" />
            </g>
          )}
          <StatusSep $m="0 0 0 23px" />
          <FindBtn>
            {ico(
              16,
              14,
              <g fill="#333">
                <rect x="1" y="4" width="6" height="10" rx="1" />
                <rect x="9" y="4" width="6" height="10" rx="1" />
                <rect x="2" y="0" width="4" height="5" />
                <rect x="10" y="0" width="4" height="5" />
                <rect x="6" y="5" width="4" height="3" />
              </g>
            )}
          </FindBtn>
          <StatusSep />
          <ModeSelect>
            一般
            <ModeArrow>
              <Arrow />
            </ModeArrow>
          </ModeSelect>
        </StatusBar>

        <Stamp>
          <StampMain>专业打杂</StampMain>
          <StampNum>340047351</StampNum>
        </Stamp>

        <Forum>
          <Svg width="60" height="60" viewBox="0 0 60 60">
            <g fill="none" strokeWidth="3">
              <ellipse cx="24" cy="20" rx="22" ry="12" transform="rotate(35 24 20)" stroke="rgba(100,130,160,.5)" />
              <ellipse cx="40" cy="36" rx="10" ry="19" transform="rotate(15 40 36)" stroke="rgba(220,90,100,.5)" />
              <ellipse cx="22" cy="45" rx="12" ry="6" stroke="rgba(100,130,160,.35)" />
            </g>
          </Svg>
          <ForumText>
            <ForumName>野火论坛</ForumName>
            <ForumUrl>www.proewildfire.cn</ForumUrl>
          </ForumText>
        </Forum>
      </Window>
    </>
  );
}
